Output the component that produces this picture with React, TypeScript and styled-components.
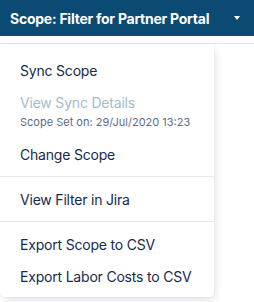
import * as React from 'react';
import styled, { createGlobalStyle } from 'styled-components';

const GlobalStyle = createGlobalStyle`
  html, body {
    margin: 0;
    padding: 0;
    background: #fff;
    font-family: Inter, "Noto Sans", sans-serif;
    -webkit-font-smoothing: antialiased;
  }
`;

const Page = styled.div`
  position: relative;
  width: 254px;
  height: 302px;
  overflow: hidden;
`;

const Header = styled.div`
  height: 36px;
  background: #0b4a72;
  display: flex;
  align-items: center;
  padding: 0 10px;
  color: #fff;
`;

const Title = styled.span`
  font-size: 14px;
  font-weight: 700;
  letter-spacing: -0.25px;
  flex: 1;
  white-space: nowrap;
`;

const Caret = styled.span`
  width: 0;
  height: 0;
  border-left: 3.5px solid transparent;
  border-right: 3.5px solid transparent;
  border-top: 4px solid #fff;
  margin-right: 4px;
`;

const Content = styled.div`
  margin-top: 7px;
  border-top: 1px solid #e4e8ee;
  height: 258px;
`;

const Menu = styled.div`
  position: absolute;
  top: 44px;
  left: 0;
  width: 214px;
  background: #fff;
  border-radius: 0 0 4px 4px;
  box-shadow: 2px 4px 10px -2px rgba(9, 30, 66, 0.16), 0 0 1px rgba(9, 30, 66, 0.22);
  padding-top: 4px;
  box-sizing: border-box;
`;

const Section = styled.div`
  padding: 6px 0;
  border-bottom: 1px solid #e4e8ee;
  &:last-child {
    border-bottom: none;
    padding-bottom: 5px;
  }
`;

const Item = styled.div<{ disabled?: boolean }>`
  padding: 0 20px;
  height: 32px;
  display: flex;
  flex-direction: column;
  justify-content: center;
  font-size: 14px;
  letter-spacing: -0.2px;
  color: ${(p) => (p.disabled ? '#a5bccd' : '#172b4d')};
  white-space: nowrap;
`;

const Note = styled.div`
  padding: 0 20px;
  margin-top: -2px;
  margin-bottom: 9px;
  height: 13px;
  line-height: 13px;
  font-size: 11px;
  color: #5e6c84;
  white-space: nowrap;
`;

export default function App() {
  return (
    <Page>
      <GlobalStyle />
      <Header>
        <Title>Scope: Filter for Partner Portal</Title>
        <Caret />
      </Header>
      <Content />
      <Menu>
        <Section>
          <Item>Sync Scope</Item>
          <Item disabled>View Sync Details</Item>
          <Note>Scope Set on: 29/Jul/2020 13:23</Note>
          <Item>Change Scope</Item>
        </Section>
        <Section>
          <Item>View Filter in Jira</Item>
        </Section>
        <Section>
          <Item>Export Scope to CSV</Item>
          <Item>Export Labor Costs to CSV</Item>
        </Section>
      </Menu>
    </Page>
  );
}
